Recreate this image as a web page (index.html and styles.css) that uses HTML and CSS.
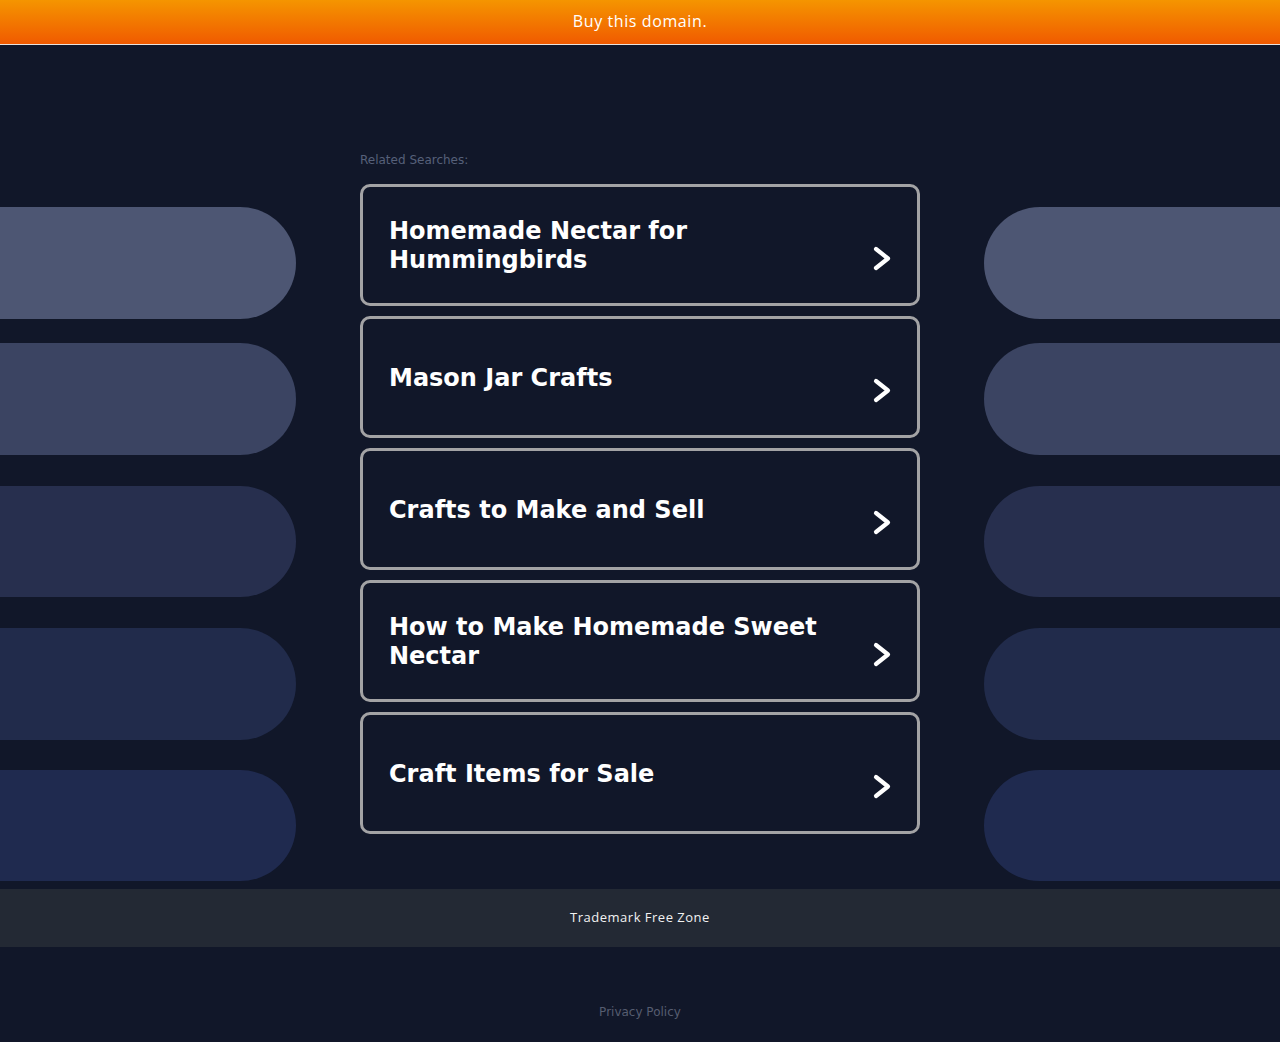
FILE: index.html
```html
<!DOCTYPE html>
<html>
	<head>
		<meta charset="UTF-8">
		<title>Related Searches</title>
		<link rel="stylesheet" href="styles.css">
	</head>
	<body>
		<div class="topBar">
			<a href="#">Buy this domain.</a>
		</div>

		<div class="main">
			<!--左侧装饰条-->
			<div class="side left">
				<div class="pill p1"></div>
				<div class="pill p2"></div>
				<div class="pill p3"></div>
				<div class="pill p4"></div>
				<div class="pill p5"></div>
			</div>

			<div class="content">
				<p class="label">Related Searches:</p>
				<ul class="list">
					<li><a href="#"><span>Homemade Nectar for Hummingbirds</span><i class="arrow"><svg width="22" height="28" viewBox="0 0 22 28"><path d="M5 5 L17 14.5 L5 24" fill="none" stroke="#fff" stroke-width="4.2" stroke-linecap="round" stroke-linejoin="round"/></svg></i></a></li>
					<li><a href="#"><span>Mason Jar Crafts</span><i class="arrow"><svg width="22" height="28" viewBox="0 0 22 28"><path d="M5 5 L17 14.5 L5 24" fill="none" stroke="#fff" stroke-width="4.2" stroke-linecap="round" stroke-linejoin="round"/></svg></i></a></li>
					<li><a href="#"><span>Crafts to Make and Sell</span><i class="arrow"><svg width="22" height="28" viewBox="0 0 22 28"><path d="M5 5 L17 14.5 L5 24" fill="none" stroke="#fff" stroke-width="4.2" stroke-linecap="round" stroke-linejoin="round"/></svg></i></a></li>
					<li><a href="#"><span>How to Make Homemade Sweet Nectar</span><i class="arrow"><svg width="22" height="28" viewBox="0 0 22 28"><path d="M5 5 L17 14.5 L5 24" fill="none" stroke="#fff" stroke-width="4.2" stroke-linecap="round" stroke-linejoin="round"/></svg></i></a></li>
					<li><a href="#"><span>Craft Items for Sale</span><i class="arrow"><svg width="22" height="28" viewBox="0 0 22 28"><path d="M5 5 L17 14.5 L5 24" fill="none" stroke="#fff" stroke-width="4.2" stroke-linecap="round" stroke-linejoin="round"/></svg></i></a></li>
				</ul>
			</div>

			<!--右侧装饰条-->
			<div class="side right">
				<div class="pill p1"></div>
				<div class="pill p2"></div>
				<div class="pill p3"></div>
				<div class="pill p4"></div>
				<div class="pill p5"></div>
			</div>
		</div>

		<div class="footer">
			<a href="#">Trademark Free Zone</a>
		</div>

		<div class="bottom">
			<a href="#">Privacy Policy</a>
		</div>
	</body>
</html>
```

FILE: styles.css
```css
*{
	margin: 0;
	padding: 0;
}
ul,li{
	list-style: none;
}
a{
	text-decoration: none;
}

body{
	background-color: #111729;
	font-family: "Open Sans", "DejaVu Sans", sans-serif;
	height: 1042px;
	overflow: hidden;
}

/* 顶部橙色条 */
.topBar{
	height: 44px;
	border-bottom: 1px solid #e9e3dd;
	background: linear-gradient(#f59500, #f05a00);
	display: flex;
	align-items: center;
	justify-content: center;
}
.topBar a{
	color: #fff;
	font-size: 16px;
	font-weight: 500;
	letter-spacing: 0.6px;
	margin-top: -2px;
}

/* 主体 */
.main{
	display: grid;
	grid-template-columns: 296px 560px 296px;
	column-gap: 64px;
	height: 844px;
}

.side{
	display: flex;
	flex-direction: column;
	padding-top: 162px;
}
.pill{
	height: 112px;
	margin-bottom: 30px;
}
.side .p1{ background-color: #4d5673; margin-bottom: 24px; }
.side .p2{ background-color: #3b4462; margin-bottom: 31px; }
.side .p3{ background-color: #272f4e; height: 111px; margin-bottom: 31px; }
.side .p4{ background-color: #212b4b; }
.side .p5{ background-color: #1f2a4f; height: 111px; }

.left .pill{
	border-radius: 0 56px 56px 0;
}
.right .pill{
	border-radius: 56px 0 0 56px;
}

.content{
	padding-top: 107px;
}
.label{
	font-family: "DejaVu Sans", sans-serif;
	font-size: 12px;
	line-height: 16px;
	color: #566079;
	margin-bottom: 16px;
}

.list li{
	margin-bottom: 10px;
}
.list a{
	display: flex;
	align-items: center;
	justify-content: space-between;
	height: 116px;
	padding: 0 26px;
	border: 3px solid #a3a3a5;
	border-radius: 10px;
	color: #fff;
	font-family: "DejaVu Sans", sans-serif;
	font-weight: bold;
	font-size: 24px;
	line-height: 29px;
}
.list a span{
	max-width: 470px;
	margin-top: 2px;
}
.arrow{
	display: block;
	width: 22px;
	height: 28px;
	margin-top: 26px;
	margin-right: -2px;
}
.arrow svg{
	display: block;
}

/* 页脚 */
.footer{
	height: 58px;
	background-color: #232934;
	display: flex;
	align-items: center;
	justify-content: center;
}
.footer a{
	color: #f2f2f2;
	font-size: 13px;
	font-weight: 500;
	letter-spacing: 0.5px;
	margin-top: -2px;
}

.bottom{
	padding-top: 52px;
	text-align: center;
}
.bottom a{
	font-family: "DejaVu Sans", sans-serif;
	color: #565d70;
	font-size: 12px;
	line-height: 16px;
}
```
